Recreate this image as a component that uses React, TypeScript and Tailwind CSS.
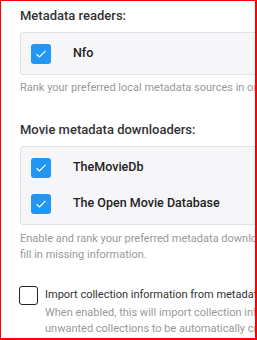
import React from "react";

const readers = ["Nfo"];
const downloaders = ["TheMovieDb", "The Open Movie Database"];

function CheckedBox() {
  return (
    <span className="flex h-[20px] w-[20px] shrink-0 items-center justify-center rounded-[3px] bg-[#2196f3]">
      <svg width="12" height="10" viewBox="0 0 12 10" fill="none">
        <path d="M1.5 5.2 4.4 8 10.5 1.8" stroke="white" strokeWidth="1.2" />
      </svg>
    </span>
  );
}

function SourceList({ items }: { items: string[] }) {
  return (
    <div className="w-[400px] rounded-[3px] border border-[#e2e2e4] bg-[#f6f6f8] px-[10px] py-[2.5px]">
      {items.map((item) => (
        <div key={item} className="flex h-[36px] items-center">
          <CheckedBox />
          <span className="ml-[22px] text-[12.5px] font-medium text-[#222]">
            {item}
          </span>
        </div>
      ))}
    </div>
  );
}

export default function App() {
  return (
    <div
      className="h-[340px] w-[257px] overflow-hidden border-t border-l border-r-2 border-b-2 border-[#ff0000] bg-white"
      style={{ fontFamily: "Roboto, sans-serif" }}
    >
      <div className="w-[500px] pl-[19px] pt-[6px]">
        <h3 className="text-[13px] font-medium leading-[18px] text-[#333]">
          Metadata readers:
        </h3>
        <div className="mt-[7px]">
          <SourceList items={readers} />
        </div>
        <p className="mt-[5px] whitespace-nowrap text-[11px] leading-[16px] text-[#999]">
          Rank your preferred local metadata sources in order of priority. The
          first file found will be read.
        </p>

        <h3 className="mt-[25px] text-[13px] font-medium leading-[18px] text-[#333]">
          Movie metadata downloaders:
        </h3>
        <div className="mt-[7px]">
          <SourceList items={downloaders} />
        </div>
        <p className="mt-[6px] whitespace-nowrap text-[11px] leading-[16px] text-[#999]">
          Enable and rank your preferred metadata downloaders in order of
          priority. Lower priority downloaders will only be used to
          <br />
          fill in missing information.
        </p>

        <div className="mt-[23px] flex items-start">
          <span className="-ml-[1px] h-[19px] w-[19px] shrink-0 rounded-[3px] border border-[#222]" />
          <div className="ml-[7px]">
            <div className="whitespace-nowrap text-[11px] leading-[18px] text-[#333]">
              Import collection information from metadata downloaders
            </div>
            <p className="mt-[1px] whitespace-nowrap text-[11px] leading-[16px] text-[#999]">
              When enabled, this will import collection information from
              metadata downloaders. This may cause
              <br />
              unwanted collections to be automatically created.
            </p>
          </div>
        </div>
      </div>
    </div>
  );
}
